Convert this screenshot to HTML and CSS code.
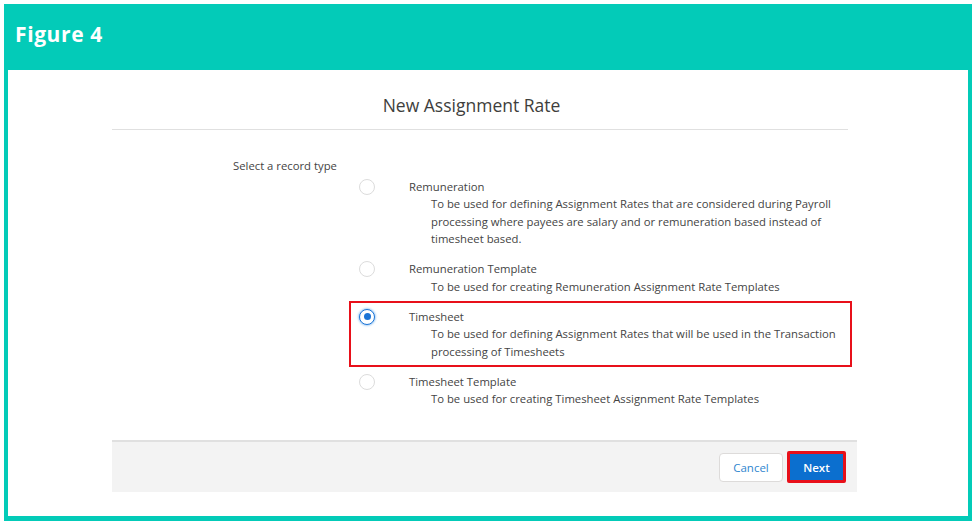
FILE: index.html
```html
<!DOCTYPE html>
<html>
<head>
<meta charset="utf-8">
<link rel="stylesheet" href="styles.css">
</head>
<body>
<div class="frame">
  <div class="fig-head">Figure 4</div>
  <div class="fig-body">
    <div class="modal">
      <div class="modal-title">New Assignment Rate</div>
      <div class="divider"></div>
      <div class="form">
        <div class="legend">Select a record type</div>
        <div class="options">
          <div class="option">
            <span class="radio"></span>
            <div class="opt-text">
              <div class="opt-label">Remuneration</div>
              <div class="opt-desc">To be used for defining Assignment Rates that are considered during Payroll processing where payees are salary and or remuneration based instead of timesheet based.</div>
            </div>
          </div>
          <div class="option">
            <span class="radio"></span>
            <div class="opt-text">
              <div class="opt-label">Remuneration Template</div>
              <div class="opt-desc">To be used for creating Remuneration Assignment Rate Templates</div>
            </div>
          </div>
          <div class="option highlighted">
            <span class="radio checked"></span>
            <div class="opt-text">
              <div class="opt-label">Timesheet</div>
              <div class="opt-desc">To be used for defining Assignment Rates that will be used in the Transaction processing of Timesheets</div>
            </div>
          </div>
          <div class="option">
            <span class="radio"></span>
            <div class="opt-text">
              <div class="opt-label">Timesheet Template</div>
              <div class="opt-desc">To be used for creating Timesheet Assignment Rate Templates</div>
            </div>
          </div>
        </div>
      </div>
      <div class="footer">
        <button class="btn btn-cancel">Cancel</button>
        <button class="btn btn-next">Next</button>
      </div>
    </div>
  </div>
</div>
</body>
</html>
```
FILE: styles.css
```css
html, body {
  margin: 0;
  padding: 0;
  background: #ffffff;
}
body {
  font-family: "Open Sans", "Noto Sans", sans-serif;
}
.frame {
  margin: 4px 4px 0 4px;
  width: 968px;
  height: 517px;
  background: #03cbb8;
  display: flex;
  flex-direction: column;
}
.fig-head {
  height: 66px;
  flex: none;
  box-sizing: border-box;
  padding: 16px 0 0 11px;
  color: #ffffff;
  font-family: "Open Sans", sans-serif;
  font-weight: 700;
  font-size: 21px;
  line-height: 28px;
  letter-spacing: 0.6px;
}
.fig-body {
  flex: 1;
  margin: 0 4px 5px 4px;
  background: #ffffff;
  display: flex;
}
.modal {
  margin-left: 104px;
  width: 745px;
  display: flex;
  flex-direction: column;
}
.modal-title {
  text-align: center;
  font-size: 17.5px;
  line-height: 24px;
  color: #3e3e3c;
  padding-top: 23px;
  padding-right: 26px;
  height: 36px;
}
.divider {
  height: 1px;
  background: #e0e0e0;
  margin-right: 9px;
}
.form {
  padding: 27px 0 0 121px;
  font-size: 11.3px;
  line-height: 17.5px;
  color: #444444;
  height: 310px;
  box-sizing: border-box;
}
.legend {
  height: 20.5px;
}
.options {
  margin-left: 126px;
  display: flex;
  flex-direction: column;
  gap: 12.5px;
}
.option {
  position: relative;
  display: flex;
  align-items: flex-start;
}
.radio {
  flex: none;
  width: 14px;
  height: 14px;
  border: 1px solid #dcdcdc;
  border-radius: 50%;
  margin-top: 1px;
  margin-right: 34px;
  background: #fff;
  box-sizing: content-box;
}
.radio.checked {
  border-color: #1b74d6;
  box-shadow: 0 0 2px 1px #a9d0f5;
  position: relative;
}
.radio.checked::after {
  content: "";
  position: absolute;
  left: 3.5px;
  top: 3.5px;
  width: 7px;
  height: 7px;
  border-radius: 50%;
  background: #1b74d6;
}
.opt-desc {
  padding-left: 22px;
  width: 410px;
}
.highlighted::after {
  content: "";
  position: absolute;
  left: -10px;
  top: -7px;
  right: 5px;
  bottom: -7px;
  border: 2px solid #e8101a;
  pointer-events: none;
}
.footer {
  margin-top: 0;
  height: 50px;
  background: #f3f3f3;
  border-top: 2px solid #e0e0e0;
  display: flex;
  justify-content: flex-end;
  align-items: center;
  padding-right: 11px;
  gap: 4px;
}
.btn {
  font-family: "Open Sans", sans-serif;
  font-size: 11.5px;
  border-radius: 4px;
  cursor: pointer;
  padding: 0;
}
.btn-cancel {
  width: 64px;
  height: 29px;
  background: #ffffff;
  border: 1px solid #dddbda;
  color: #2f86cf;
}
.btn-next {
  width: 59px;
  height: 32px;
  background: #0b6fcf;
  border: 3px solid #e8101a;
  border-radius: 2px;
  color: #ffffff;
  font-weight: 600;
}
```
